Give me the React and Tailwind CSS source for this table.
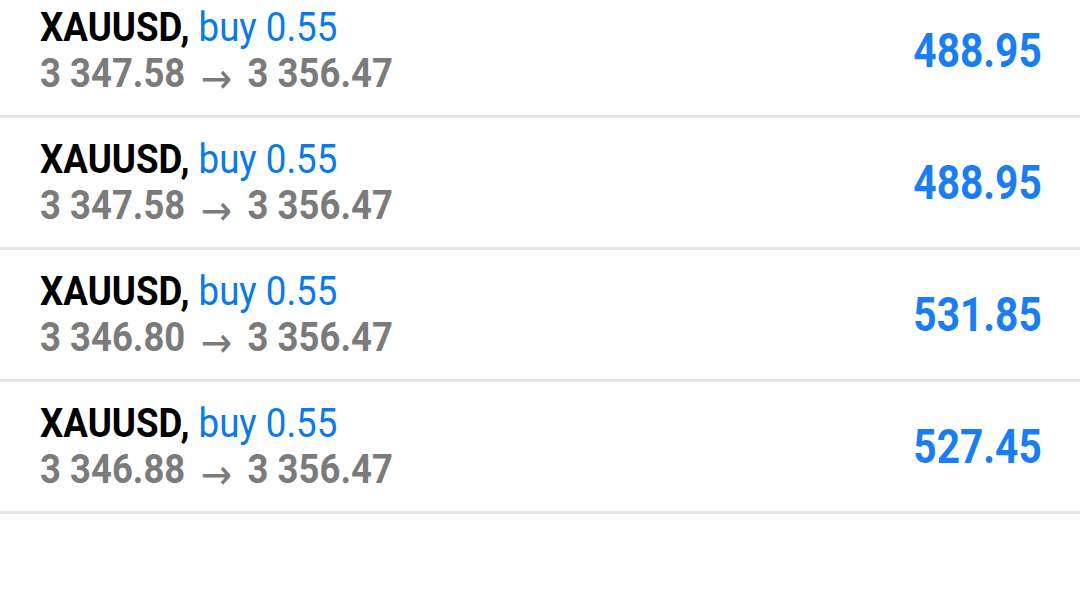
export default function App() {
  const rows = [
    { from: "3 347.58", to: "3 356.47", profit: "488.95" },
    { from: "3 347.58", to: "3 356.47", profit: "488.95" },
    { from: "3 346.80", to: "3 356.47", profit: "531.85" },
    { from: "3 346.88", to: "3 356.47", profit: "527.45" },
  ];
  return (
    <div className="w-[1080px] h-[608px] bg-white overflow-hidden" style={{ fontFamily: "Roboto, 'Liberation Sans', sans-serif" }}>
      <div className="-mt-[14px] flex flex-col">
        {rows.map((r, i) => (
          <div key={i} className="h-[132px] border-b-[3px] border-[#e6e6e6] flex items-center justify-between pl-[40px] pr-[38px]">
            <div className="flex flex-col pb-[2px]">
              <div className="origin-left scale-x-[0.895] text-[41px] leading-[46px] whitespace-nowrap">
                <span className="font-bold text-black">XAUUSD,</span>{" "}
                <span className="text-[#0a7ae8]">buy 0.55</span>
              </div>
              <div className="origin-left scale-x-[0.89] text-[41px] leading-[46px] font-bold text-[#7b7b7b] whitespace-nowrap flex items-baseline">
                <span>{r.from}</span>
                <span className="inline-block w-[36px] mx-[17px] text-center font-normal text-[42px] translate-y-[6px]" style={{ fontFamily: "'DejaVu Sans', sans-serif" }}>→</span>
                <span>{r.to}</span>
              </div>
            </div>
            <div className="origin-right scale-x-[0.83] text-[49px] leading-[56px] font-bold text-[#1a7ef2]">
              {r.profit}
            </div>
          </div>
        ))}
      </div>
    </div>
  );
}
